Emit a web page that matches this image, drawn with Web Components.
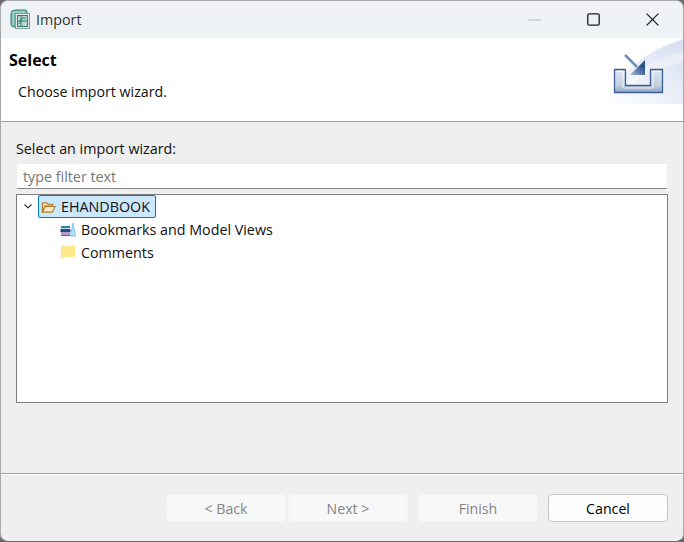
<!DOCTYPE html>
<html>
<head>
<meta charset="utf-8">
<title>Import</title>
<style>
  html, body { margin: 0; padding: 0; background: #6b6b6b; }
  body { width: 684px; height: 542px; overflow: hidden; font: 14.3px "Open Sans", "Noto Sans", sans-serif; }
</style>
</head>
<body>
<import-dialog></import-dialog>
<script>
class TitleBar extends HTMLElement {
  constructor() {
    super();
    this.attachShadow({ mode: "open" });
    this.shadowRoot.innerHTML = `
      <style>
        :host { display: flex; align-items: center; height: 37px; background: #eef2f5; padding-left: 9px; color: #333; font-size: 14.3px; }
        .logo { width: 20px; height: 22px; margin-right: 6px; flex: none; }
        .title { flex: 1; }
        .ctl { width: 59px; height: 37px; display: flex; align-items: center; justify-content: center; flex: none; }
      </style>
      <svg class="logo" viewBox="0 0 20 22">
        <path d="M1 5Q1 1 5 1H15Q17 1 17 3V5H7V18H4Q1 18 1 15Z" fill="#6fb3a8" stroke="#2f8478"/>
        <path d="M3 3H15M3 3V16" fill="none" stroke="#c9e4df"/>
        <rect x="5.500" y="4.500" width="14" height="15" fill="#e3e8e7" stroke="#8a9c9a"/>
        <rect x="7.500" y="6.500" width="10" height="11" fill="#b7d8d0" stroke="#2f8478"/>
        <path d="M9 15L12 9H16M11 7V17M8 12H17" fill="none" stroke="#2f7f74"/>
      </svg>
      <span class="title"><slot></slot></span>
      <span class="ctl"><svg width="13" height="2"><path d="M0 1H13" stroke="#b9bbbc"/></svg></span>
      <span class="ctl"><svg width="13" height="13"><rect x=".8" y=".8" width="11.4" height="11.4" rx="1.5" fill="none" stroke="#1b1b1b" stroke-width="1.3"/></svg></span>
      <span class="ctl" style="margin-right:1px"><svg width="13" height="13"><path d="M.6.6L12.4 12.4M12.4.6L.6 12.4" stroke="#1b1b1b" stroke-width="1.2"/></svg></span>
    `;
  }
}
customElements.define("title-bar", TitleBar);

class WizardBanner extends HTMLElement {
  constructor() {
    super();
    this.attachShadow({ mode: "open" });
    this.shadowRoot.innerHTML = `
      <style>
        :host { display: flex; height: 83px; background: #fff; border-bottom: 1px solid #a0a0a0; }
        .text { flex: 1; padding: 11px 0 0 8px; }
        .head { font-weight: 700; font-size: 16px; color: #000; line-height: 22px; }
        .sub { margin: 11px 0 0 9px; font-size: 14.2px; color: #111; line-height: 20px; }
        svg { width: 77px; height: 66px; flex: none; }
      </style>
      <div class="text">
        <div class="head"><slot name="head"></slot></div>
        <div class="sub"><slot name="sub"></slot></div>
      </div>
      <svg viewBox="0 0 77 66">
        <defs>
          <linearGradient id="bg" x1="0" y1="1" x2="1" y2="0"><stop offset="0" stop-color="#fff"/><stop offset="1" stop-color="#d5def0"/></linearGradient>
          <linearGradient id="tray" x1="0" y1="0" x2="0" y2="1"><stop offset="0" stop-color="#dfe5ee"/><stop offset=".7" stop-color="#c3cfe0"/><stop offset="1" stop-color="#8fa3c6"/></linearGradient>
          <linearGradient id="ar" x1="0" y1="1" x2="1" y2="0"><stop offset="0" stop-color="#a9bcda"/><stop offset=".7" stop-color="#2c5590"/></linearGradient>
        </defs>
        <path d="M1 66Q14 22 77 1V66Z" fill="url(#bg)"/>
        <path d="M20 50Q44 32 77 24V13Q36 24 20 50Z" fill="#fff" opacity=".35"/>
        <path d="M8.500 31.500H19.500V47.500H44.500V31.500H56.500V54.500H8.500Z" fill="url(#tray)" stroke="#3c5f95" stroke-width="1.300"/>
        <path d="M11 33.500H17V50H47V33.500H54" fill="none" stroke="#fff" opacity=".75"/>
        <path d="M19 17L31 29" stroke="#6f8fbd" stroke-width="2.500"/>
        <path d="M24 37H39V22Z" fill="url(#ar)"/>
      </svg>
    `;
  }
}
customElements.define("wizard-banner", WizardBanner);

class FilterInput extends HTMLElement {
  constructor() {
    super();
    this.attachShadow({ mode: "open" });
    this.shadowRoot.innerHTML = `
      <style>
        :host { display: block; height: 25px; margin: 0 1px; }
        input { display: block; box-sizing: border-box; width: 100%; height: 25px; border: 0; border-bottom: 1px solid #8a8a8a; background: #fff; padding: 1px 0 0 6px; margin: 0; font: inherit; outline: 0; }
        input::placeholder { color: #767676; opacity: 1; }
      </style>
      <input type="text" placeholder="${this.getAttribute("placeholder") || ""}">
    `;
  }
}
customElements.define("filter-input", FilterInput);

class TreeItem extends HTMLElement {
  constructor() {
    super();
    this.attachShadow({ mode: "open" });
    this.shadowRoot.innerHTML = `
      <style>
        :host { display: flex; align-items: center; height: 23px; color: #111; }
        :host([selected]) .label { background: #cce8ff; outline: 1px solid #0078d7; outline-offset: -1px; padding-right: 6px; }
        .label { display: flex; align-items: center; gap: 5px; height: 23px; padding: 0 2px 0 3px; border-radius: 2px; white-space: nowrap; }
        ::slotted(svg) { flex: none; }
      </style>
      <span class="label"><slot name="icon"></slot><slot></slot></span>
    `;
  }
}
customElements.define("tree-item", TreeItem);

class TreeView extends HTMLElement {
  constructor() {
    super();
    this.attachShadow({ mode: "open" });
    this.shadowRoot.innerHTML = `
      <style>
        :host { display: block; height: 209px; box-sizing: border-box; background: #fff; border: 1px solid #7f7f7f; }
        .top { display: flex; align-items: center; height: 23px; padding-left: 7px; }
        .top svg { margin-right: 6px; flex: none; }
        .kids { padding-left: 40px; }
      </style>
      <div class="top">
        <svg width="8" height="5" viewBox="0 0 8 5"><path d="M.5.5L4 4L7.500.5" fill="none" stroke="#333" stroke-width="1.100"/></svg>
        <slot name="root"></slot>
      </div>
      <div class="kids"><slot></slot></div>
    `;
  }
}
customElements.define("tree-view", TreeView);

class WizardButton extends HTMLElement {
  constructor() {
    super();
    this.attachShadow({ mode: "open" });
    this.shadowRoot.innerHTML = `
      <style>
        :host { display: flex; align-items: center; justify-content: center; box-sizing: border-box; width: 120px; height: 28px; border: 1px solid #c6c6c6; border-radius: 4px; background: #fdfdfd; color: #000; font-size: 14.2px; }
        :host([disabled]) { background: #f8f8f8; border-color: #f3f3f3; color: #858585; }
      </style>
      <slot></slot>
    `;
  }
}
customElements.define("wizard-button", WizardButton);

class ImportDialog extends HTMLElement {
  constructor() {
    super();
    this.attachShadow({ mode: "open" });
    this.shadowRoot.innerHTML = `
      <style>
        :host { display: flex; flex-direction: column; box-sizing: border-box; width: 684px; height: 542px; background: #efefef; border: 1px solid #a8a8a8; border-bottom-color: #6b6b6b; border-radius: 8px; overflow: hidden; color: #111; }
        .body { flex: 1; padding: 17px 15px 0 15px; display: flex; flex-direction: column; }
        .lbl { line-height: 20px; height: 25px; }
        filter-input { margin-bottom: 5px; }
        .foot { height: 68px; border-top: 1px solid #a0a0a0; box-shadow: inset 0 1px 0 #fff; display: flex; justify-content: flex-end; align-items: flex-start; gap: 10px; padding: 20px 15px 0 0; box-sizing: border-box; }
        .nav { display: flex; gap: 2px; }
      </style>
      <title-bar>Import</title-bar>
      <wizard-banner>
        <span slot="head">Select</span>
        <span slot="sub">Choose import wizard.</span>
      </wizard-banner>
      <div class="body">
        <div class="lbl">Select an import wizard:</div>
        <filter-input placeholder="type filter text"></filter-input>
        <tree-view>
          <tree-item slot="root" selected>
            <svg slot="icon" width="15" height="14" viewBox="0 0 16 14"><path d="M1.500 12V2.500H6L7.500 4H12.500V6H4.500L1.500 12Z" fill="#f7d9a2" stroke="#ad7a2f" stroke-width="1.200"/><path d="M1.500 12.500L4.500 6.500H15L12 12.500Z" fill="#fcebc6" stroke="#ad7a2f" stroke-width="1.200"/></svg>
            EHANDBOOK
          </tree-item>
          <tree-item>
            <svg slot="icon" width="16" height="14" viewBox="0 0 16 14"><rect x="1" y="3" width="9" height="2" fill="#2a86a8"/><rect x="1" y="5" width="9" height="1" fill="#c9dce8"/><rect x="0.500" y="6" width="10" height="3" fill="#1f4f8a"/><rect x="1" y="9" width="9" height="3" fill="#b49bd0"/><rect x="1" y="12" width="9" height="1" fill="#6f5a98"/><path d="M10.500 13L13 0L15.500 13Z" fill="#b4e2f7" stroke="#55b4e6" stroke-width=".7"/></svg>
            Bookmarks and Model Views
          </tree-item>
          <tree-item>
            <svg slot="icon" width="16" height="14" viewBox="0 2 16 14"><path d="M1 2H15V13H5L1 15Z" fill="#fde98c"/></svg>
            Comments
          </tree-item>
        </tree-view>
      </div>
      <div class="foot">
        <div class="nav">
          <wizard-button disabled>&lt; Back</wizard-button>
          <wizard-button disabled>Next &gt;</wizard-button>
        </div>
        <wizard-button disabled>Finish</wizard-button>
        <wizard-button>Cancel</wizard-button>
      </div>
    `;
  }
}
customElements.define("import-dialog", ImportDialog);
</script>
</body>
</html>
